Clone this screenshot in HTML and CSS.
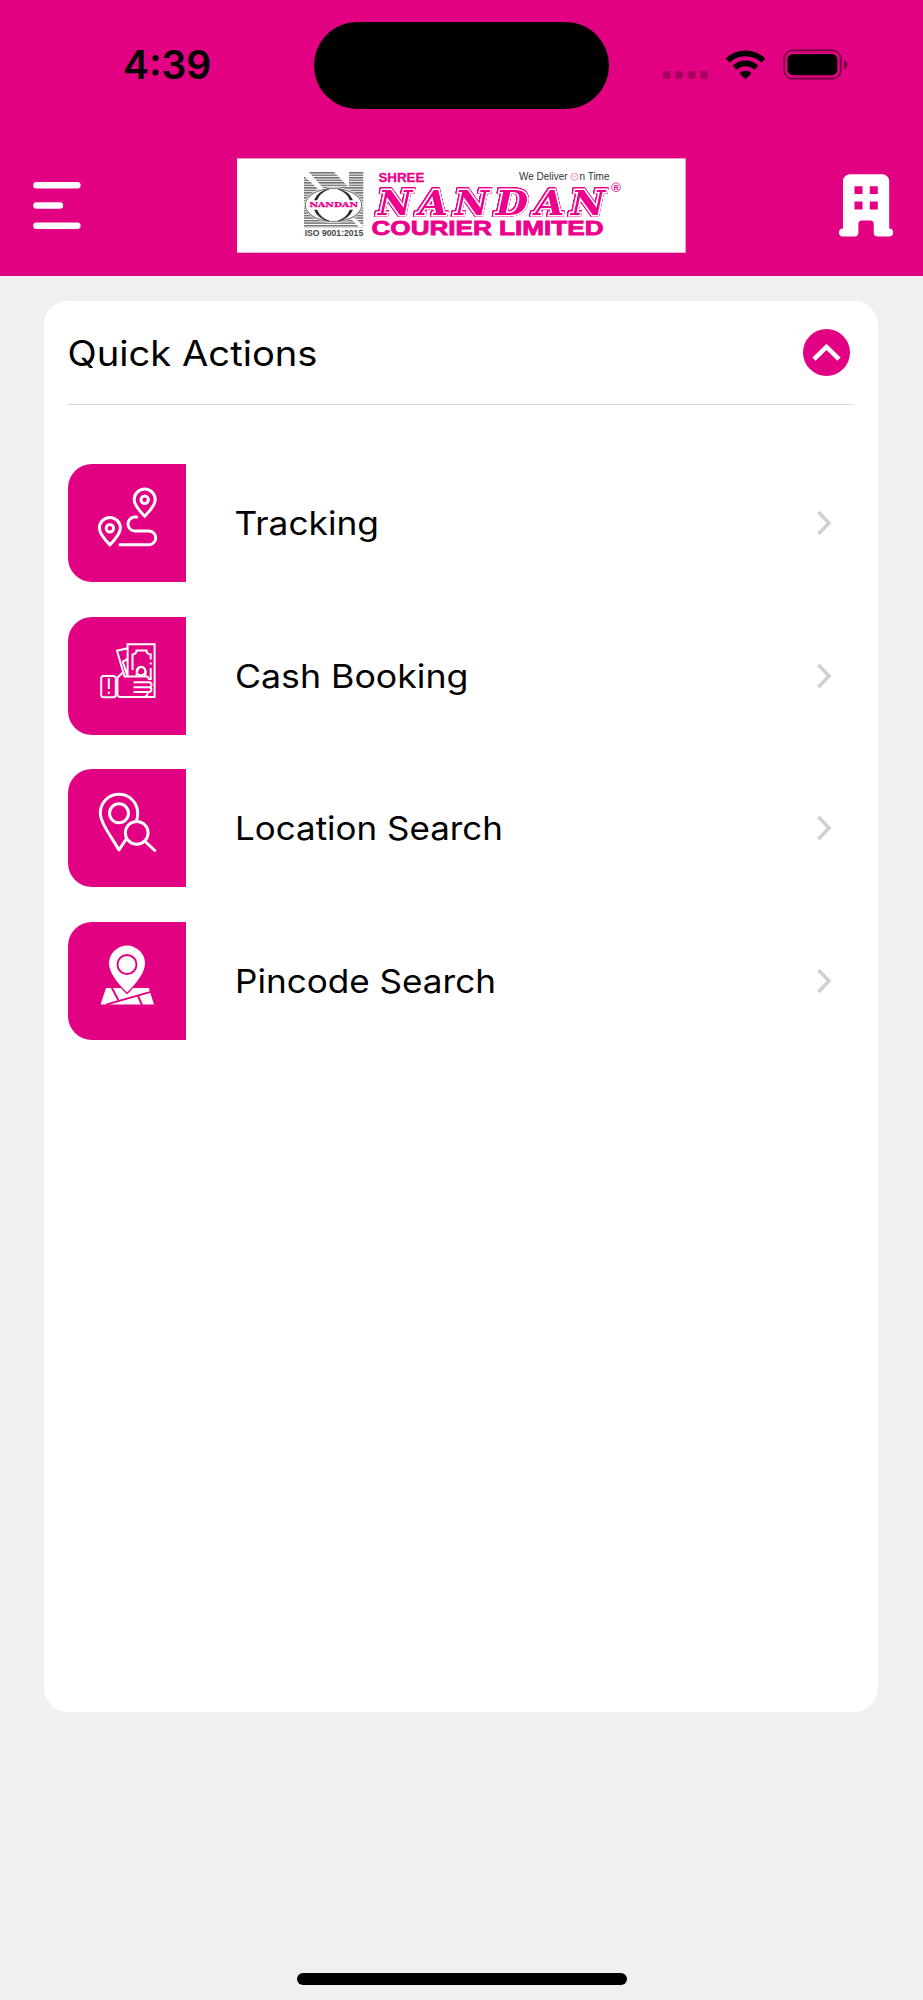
FILE: index.html
```html
<!DOCTYPE html>
<html lang="en">
<head>
<meta charset="utf-8">
<title>Quick Actions</title>
<link rel="stylesheet" href="styles.css">
</head>
<body>
<div class="screen">
  <header class="header">
    <div class="status">
      <span class="time">4:39</span>
      <div class="island"></div>
      <svg class="indicators" width="186" height="32" viewBox="662 48 186 32">
        <g opacity=".25"><rect x="662.7" y="71" width="7.8" height="8" rx="2.4"/><rect x="675.2" y="71" width="7.8" height="8" rx="2.4"/><rect x="687.8" y="71" width="7.8" height="8" rx="2.4"/><rect x="700.3" y="71" width="7.8" height="8" rx="2.4"/></g>
        <g fill="none" stroke="#000" stroke-width="5.6"><path d="M727.6 60.6a25.7 25.7 0 0 1 35.8 0"/><path d="M734.6 67.7a15.8 15.8 0 0 1 21.8 0"/></g>
        <path d="M745.5 79.3l-6-6.1a8.6 8.6 0 0 1 12 0z"/>
        <rect x="784.2" y="50.3" width="56.6" height="28.4" rx="8.3" fill="none" stroke="#000" stroke-opacity=".5" stroke-width="1.7"/>
        <rect x="787.6" y="54" width="49.7" height="21.2" rx="5.5"/>
        <path d="M844 60.2q3.3 1.4 3.3 4.5t-3.3 4.5z" opacity=".5"/>
      </svg>
    </div>
    <nav class="nav">
      <button class="icon-button" aria-label="Menu"><svg width="48" height="47" viewBox="33 182 48 47" fill="#fff"><rect x="33.2" y="182" width="47.4" height="6.6" rx="3.3"/><rect x="33.2" y="202.2" width="30" height="6.6" rx="3.3"/><rect x="33.2" y="222.4" width="47.4" height="6.6" rx="3.3"/></svg></button>
      <svg class="logo" width="449" height="95" viewBox="237 158 449 95">
        <defs>
          <pattern id="stripes" width="4" height="2.52" patternUnits="userSpaceOnUse" y="172"><rect width="4" height="1.5" fill="#6f6f6f"/></pattern>
        </defs>
        <rect x="237" y="158.4" width="448.6" height="94.3" fill="#fff"/>
        <path d="M310 172H334L349 187.500V172H363.300V227.500L304 227.500V172Z" fill="url(#stripes)"/>
        <path d="M304 171L308 171L324 189L318 189L304 176Z" fill="#fff"/>
        <path d="M350 218H355L364 227H359Z" fill="#fff"/>
        <ellipse cx="333.500" cy="205" rx="29.300" ry="17.800" fill="#fff"/>
        <ellipse cx="333.500" cy="205" rx="28.200" ry="16.500" fill="#fff" stroke="#777" stroke-width="1.100"/>
        <path d="M314.500 200Q318 191 329 189Q320 192.500 317 200ZM352.500 200Q349 191 338 189Q347 192.500 350 200ZM314.500 210Q318 219 329 221Q320 217.500 317 210ZM352.500 210Q349 219 338 221Q347 217.500 350 210Z" fill="#222" stroke="#222" stroke-width=".5"/>
        <text class="logo-serif-small" x="309.500" y="207.300" textLength="48.500" lengthAdjust="spacingAndGlyphs">NANDAN</text>
        <text class="logo-iso" x="304.700" y="235.800" textLength="58.500" lengthAdjust="spacingAndGlyphs">ISO 9001:2015</text>
        <text class="logo-shree" x="378.400" y="181.700" textLength="46" lengthAdjust="spacingAndGlyphs">SHREE</text>
        <text class="logo-name" x="378" y="214.500" textLength="234" lengthAdjust="spacingAndGlyphs">NANDAN</text>
        <text class="logo-courier" x="371.500" y="235.300" textLength="232" lengthAdjust="spacingAndGlyphs">COURIER LIMITED</text>
        <text class="logo-tag" x="519" y="180" textLength="48.500" lengthAdjust="spacingAndGlyphs">We Deliver</text>
        <circle cx="574.500" cy="176.800" r="3.500" fill="none" stroke="#f377bd" stroke-width=".9"/>
        <path d="M573 175.500l1.500 1.500 1.800-1.500" fill="none" stroke="#f377bd" stroke-width=".8"/>
        <text class="logo-tag" x="579.500" y="180" textLength="30" lengthAdjust="spacingAndGlyphs">n Time</text>
        <circle cx="616" cy="187.200" r="4.300" fill="none" stroke="#ec008c" stroke-width=".8"/>
        <text class="logo-reg" x="616" y="189.500" text-anchor="middle">R</text>
      </svg>
      <button class="icon-button" aria-label="Office"><svg width="54" height="63" viewBox="838.300 174 54 63"><path fill="#fff" fill-rule="evenodd" d="M849.300 174.300H881.500a7 7 0 0 1 7 7V228.600a4 4 0 0 1 0 8H877q-4 0-4-4V224q0-3.500-3.500-3.500H861.200q-3.500 0-3.500 3.500V232.600q0 4-4 4H842.300a4 4 0 0 1 0-8V181.300a7 7 0 0 1 7-7ZM853.800 186.300h8v7.800h-8ZM869.100 186.300h8v7.800h-8ZM853.800 201.600h8v7.800h-8ZM869.100 201.600h8v7.800h-8Z"/></svg></button>
    </nav>
  </header>
  <main class="card">
    <div class="card-head">
      <svg class="title" width="260" height="104" role="heading" aria-level="1"><text x="-.5" y="65.300" textLength="250" lengthAdjust="spacingAndGlyphs">Quick Actions</text></svg>
      <button class="toggle" aria-label="Collapse"><svg width="47" height="47" viewBox="0 0 47 47"><path d="M11 30.200L23.500 17.800L36 30.200" fill="none" stroke="#fff" stroke-width="4.500"/></svg></button>
    </div>
    <ul class="actions">
      <li class="action">
        <svg class="tile" viewBox="0 0 118 118" fill="none" stroke="#fff" stroke-width="3" stroke-linecap="round" stroke-linejoin="round"><path d="M76.700 52.300C72.500 48 66.200 41 66.200 35.500a10.500 10.500 0 0 1 21 0C87.200 41 80.900 48 76.700 52.300Z"/><circle cx="76.700" cy="35.700" r="3.700"/><path d="M41.900 80.900C37.700 76.600 31.400 69.600 31.400 64.100a10.500 10.500 0 0 1 21 0C52.400 69.600 46.100 76.600 41.900 80.900Z"/><circle cx="41.900" cy="64.300" r="3.700"/><path d="M68.800 53H67a7 7 0 0 0 0 14H80.800a6.900 6.900 0 0 1 0 13.800H52"/></svg>
        <svg class="label" height="118"><text x="-1.500" y="71" textLength="144.500" lengthAdjust="spacingAndGlyphs">Tracking</text></svg>
        <svg class="chevron" width="14" height="26" viewBox="0 0 14 26"><path d="M1.500 2L12 13L1.500 24"/></svg>
      </li>
      <li class="action">
        <svg class="tile" viewBox="0 0 118 118" fill="none" stroke="#fff" stroke-width="2"><path d="M59.600 59.300V27.300H86.600V80H51.500Q50 79.800 49.500 77.700Q49.400 77 48.700 77M56.500 59.500L49 33.700L59.600 31.200M54.700 44.300Q58.500 43.500 59 41.500M54.600 44L59.200 58.500"/><path d="M64.500 53V37.500Q68.300 37 68.500 33.600H78.500Q78.700 37 82.700 37.500V42.500M82.700 45.500v2M82.700 51V63M68.300 59Q69.500 50 73 50t4.800 4.400q0 2.500-1 4.600"/><circle cx="73" cy="54" r="4.300"/><rect x="33.200" y="59" width="14.600" height="21.200" rx="2.500"/><path d="M40.800 61V72M40.800 74.800v2M54.600 55.800L49.400 60.800V77M56 59.500H78.500Q81 60 81 63M65.500 65.200H81a2.500 2.500 0 0 1 0 5H65.500M81 70.200a2.400 2.400 0 0 1 0 4.800H65.500M79.500 75q.8 4.700-4 5"/></svg>
        <svg class="label" height="118"><text x="-1" y="71" textLength="233.500" lengthAdjust="spacingAndGlyphs">Cash Booking</text></svg>
        <svg class="chevron" width="14" height="26" viewBox="0 0 14 26"><path d="M1.500 2L12 13L1.500 24"/></svg>
      </li>
      <li class="action">
        <svg class="tile" viewBox="0 0 118 118" fill="none" stroke="#fff" stroke-width="3" stroke-linecap="round" stroke-linejoin="round"><path d="M68.500 51.500Q69.900 48 69.700 44A18.700 18.700 0 1 0 32.300 44C32.300 53 42 66 51 81L58.500 69.500"/><circle cx="51" cy="44.300" r="9.500"/><circle cx="68.700" cy="63.800" r="11.400"/><path d="M77.200 72.500L86.800 81.500"/></svg>
        <svg class="label" height="118"><text x="-1" y="71" textLength="268" lengthAdjust="spacingAndGlyphs">Location Search</text></svg>
        <svg class="chevron" width="14" height="26" viewBox="0 0 14 26"><path d="M1.500 2L12 13L1.500 24"/></svg>
      </li>
      <li class="action">
        <svg class="tile" viewBox="0 0 118 118"><path d="M38 66H80.800L86 82.400H32.500Z" fill="#fff"/><path d="M38 82.700L83.500 69.600M43.700 65.500L50.300 78M70 74L74 83" fill="none" stroke="#e20182" stroke-width="1.900"/><path d="M59 72.500C52 65.500 40.800 53 40.800 42a18.200 18.200 0 0 1 36.400 0C77.200 53 66 65.500 59 72.500Z" fill="#e20182"/><path d="M59 70.500C52 63.500 41 51.500 41 41.500a18 18 0 0 1 36 0C77 51.500 66 63.500 59 70.500Z" fill="#fff"/><circle cx="59" cy="42.500" r="9.500" fill="none" stroke="#e20182" stroke-width="1.900"/></svg>
        <svg class="label" height="118"><text x="-1" y="71" textLength="261" lengthAdjust="spacingAndGlyphs">Pincode Search</text></svg>
        <svg class="chevron" width="14" height="26" viewBox="0 0 14 26"><path d="M1.500 2L12 13L1.500 24"/></svg>
      </li>
    </ul>
  </main>
  <footer class="home"><div class="home-bar"></div></footer>
</div>
</body>
</html>
```
FILE: styles.css
```css
* { box-sizing: border-box; }
body { margin: 0; background: #f0f0f0; color: #000; font-family: Inter, "Noto Sans", sans-serif; }
.screen { width: 923px; height: 2000px; display: flex; flex-direction: column; }
button { border: 0; padding: 0; background: none; display: block; }
svg { display: block; }

.header { height: 276px; background: #e20182; flex: none; }
.status { height: 130px; display: flex; align-items: flex-start; padding: 22px 0 0 123px; }
.time { width: 191px; padding-top: 19px; font-size: 39px; line-height: 48px; font-weight: 600; }
.island { width: 295px; height: 87px; border-radius: 43.500px; background: #000; }
.indicators { margin: 26px 0 0 53px; }
.nav { height: 146px; display: flex; align-items: center; justify-content: space-between; padding: 5px 30.500px 0 33px; }
.nav .logo { margin-left: 3.500px; }

.logo-serif-small { font: 700 6.800px "DejaVu Serif", serif; fill: #ec008c; stroke: #ec008c; stroke-width: .3px; }
.logo-iso { font: 700 9.300px "Liberation Sans", sans-serif; fill: #444; }
.logo-shree { font: 700 13px "Liberation Sans", sans-serif; fill: #ec008c; stroke: #ec008c; stroke-width: .3px; }
.logo-name {
  font: italic 700 33px "DejaVu Serif", serif;
  letter-spacing: 6px;
  fill: #ec008c;
  stroke: #fff;
  stroke-width: 3px;
  paint-order: stroke;
  filter: drop-shadow(.6px 0 0 #ec008c) drop-shadow(-.6px 0 0 #ec008c) drop-shadow(0 .5px 0 #ec008c) drop-shadow(0 -.5px 0 #ec008c);
}
.logo-courier { font: 700 20px "Liberation Sans", sans-serif; fill: #ec008c; stroke: #ec008c; stroke-width: .8px; }
.logo-tag { font: 400 10.800px "Liberation Sans", sans-serif; fill: #333; }
.logo-reg { font: 700 6.500px "Liberation Sans", sans-serif; fill: #ec008c; }

.card { width: 834px; height: 1411px; margin: 25px 0 0 44px; padding: 0 24px; background: #fff; border-radius: 24px; flex: none; }
.card-head { height: 104px; display: flex; align-items: center; justify-content: space-between; border-bottom: 1px solid #dadada; padding-right: 4px; }
.title { overflow: visible; font-size: 35px; font-weight: 400; }
.toggle { width: 47px; height: 47px; border-radius: 50%; background: #e20182; }
.actions { list-style: none; margin: 0; padding: 59px 23px 0 0; display: flex; flex-direction: column; gap: 34.700px; }
.action { height: 118px; display: flex; align-items: center; }
.tile { width: 118px; height: 118px; background: #e20182; border-radius: 24px 0 0 24px; margin-right: 50px; }
.label { flex: 1; overflow: visible; font-size: 32.500px; font-weight: 400; }
.chevron path { fill: none; stroke: #d0d0d5; stroke-width: 3.600; }

.home { flex: 1; display: flex; align-items: flex-end; justify-content: center; padding-bottom: 15px; }
.home-bar { width: 330px; height: 12px; border-radius: 6px; background: #000; }
```
